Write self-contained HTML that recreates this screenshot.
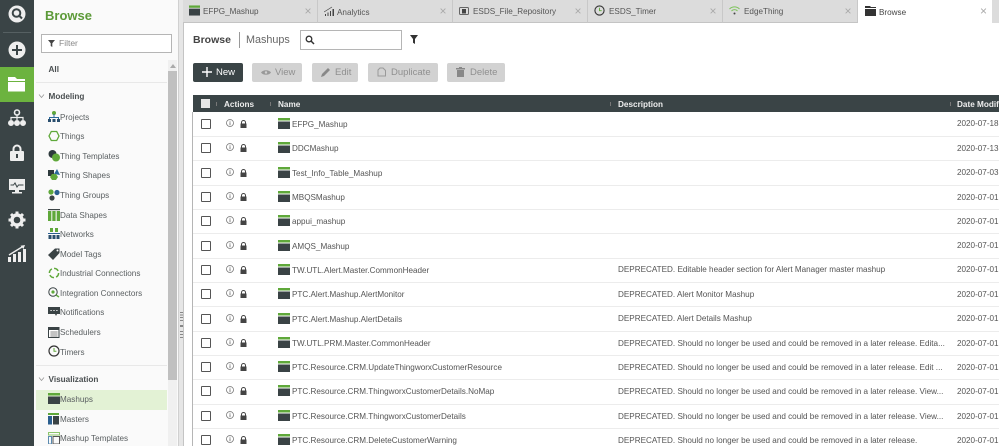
<!DOCTYPE html>
<html><head><meta charset="utf-8"><style>
html,body{margin:0;padding:0}
body{width:999px;height:446px;overflow:hidden;position:relative;background:#fff;font-family:"Liberation Sans",sans-serif;font-size:8.15px;color:#555;filter:blur(.3px)}
div,span,svg{position:absolute;white-space:nowrap;box-sizing:border-box}
.s{left:60px;height:16px;line-height:16px;color:#5a5f61;font-size:8.15px}
.si{left:48px;width:12px;height:12px}
.h{left:48.5px;font-weight:bold;color:#4a4f51;font-size:8.2px;line-height:14px}
.tab{top:0;height:23px;background:#dcdcdc;border-bottom:1px solid #c4c4c4;border-right:1px solid #c8c8c8}
.tl{top:5px;font-size:8.15px;line-height:13px;color:#555}
.x{top:5px;color:#aaa;font-size:12px;line-height:13px}
.b{top:63px;height:19px;background:#d2d2d2;border-radius:2px;color:#8f8f8f;font-size:9.5px;line-height:19px}
.ck{left:201px;width:10px;height:10px;border:1.2px solid #555;border-radius:1px;background:#fff}
.n{left:292px;font-size:8.15px;line-height:14px;color:#555}
.d{left:618px;font-size:8.15px;line-height:14px;color:#555}
.t{left:957px;font-size:8.15px;line-height:14px;color:#555}
.m{left:278px;width:12px;height:11px}
.i{left:226px;width:8px;height:8px}
.l{left:240px;width:7px;height:8px}
.r{left:193px;width:806px;height:1px;background:#ececec}
.th{top:98px;font-size:8.2px;line-height:14px;font-weight:bold;color:#eee}
</style></head><body>
<svg width="0" height="0" style="left:0;top:0"><defs>
<symbol id="m" viewBox="0 0 12 11"><rect width="12" height="2.5" fill="#5fa83a"/><rect y="3.5" width="12" height="7.5" fill="#3a4345"/></symbol>
<symbol id="k" viewBox="0 0 7 8"><path d="M1.5 4V2.5a2 2 0 0 1 4 0V4" fill="none" stroke="#444" stroke-width="1"/><rect y="3.5" x=".5" width="6" height="4.5" fill="#444"/></symbol>
<symbol id="f" viewBox="0 0 8 8"><circle cx="4" cy="4" r="3.5" fill="none" stroke="#777" stroke-width=".8"/><path d="M4 3.2V6.2M4 1.8v.8" stroke="#777" stroke-width=".9"/></symbol>
</defs></svg>

<!-- left rail -->
<div style="left:0;top:0;width:34px;height:446px;background:#3a4446"></div>
<div style="left:3px;top:32px;width:28px;height:1px;background:#566062"></div>
<div style="left:0;top:67px;width:34px;height:35px;background:#6cb33f"></div>
<svg style="left:8px;top:5px" width="18" height="18" viewBox="0 0 18 18"><circle cx="9" cy="9" r="8.5" fill="#eee"/><circle cx="8.5" cy="8" r="3.8" fill="none" stroke="#3a4446" stroke-width="2"/><path d="M11 10.5L14 13.5" stroke="#3a4446" stroke-width="2"/></svg>
<svg style="left:8px;top:41px" width="18" height="18" viewBox="0 0 18 18"><circle cx="9" cy="9" r="8.5" fill="#eee"/><path d="M9 4v10M4 9h10" stroke="#3a4446" stroke-width="2"/></svg>
<svg style="left:8px;top:77px" width="18" height="15" viewBox="0 0 18 15"><path d="M0 0h7l2 2h8v2H0z" fill="#fff"/><rect y="5" width="17" height="9.5" fill="#fff"/></svg>
<svg style="left:8px;top:109px" width="18" height="18" viewBox="0 0 18 18" fill="none" stroke="#eee"><circle cx="9" cy="3.5" r="2.5" stroke-width="1.6"/><path d="M9 6v5M3 11V8.5h12V11" stroke-width="1.2"/><circle cx="3" cy="14" r="2.5" fill="#eee"/><circle cx="9" cy="14" r="2.5" fill="#eee"/><circle cx="15" cy="14" r="2.5" fill="#eee"/></svg>
<svg style="left:10px;top:144px" width="14" height="17" viewBox="0 0 14 17"><path d="M3.5 8V5a3.5 3.5 0 0 1 7 0v3" fill="none" stroke="#eee" stroke-width="2"/><rect y="7" width="14" height="10" rx="1" fill="#eee"/><rect x="6" y="10" width="2" height="4" fill="#3a4446"/></svg>
<svg style="left:9px;top:179px" width="16" height="15" viewBox="0 0 16 15"><rect width="16" height="11" fill="#eee"/><path d="M1.5 6h3l1.5-2 2 4 1.5-2h5" fill="none" stroke="#3a4446"/><rect x="6" y="11" width="4" height="2" fill="#eee"/><rect x="3" y="13" width="10" height="1.5" fill="#eee"/></svg>
<svg style="left:8px;top:211px" width="18" height="18" viewBox="0 0 18 18"><circle cx="9" cy="9" r="5" fill="none" stroke="#eee" stroke-width="3.4"/><path d="M9 .5v3M9 14.5v3M.5 9h3M14.5 9h3M3 3l2 2M13 13l2 2M15 3l-2 2M5 13l-2 2" stroke="#eee" stroke-width="3"/></svg>
<svg style="left:8px;top:245px" width="18" height="17" viewBox="0 0 18 17"><path d="M1 10L14 2" stroke="#eee" stroke-width="1.4" fill="none"/><path d="M12.5 .8L17 0l-1.5 4z" fill="#eee"/><rect y="12" width="3" height="5" fill="#eee"/><rect x="5" y="9" width="3" height="8" fill="#eee"/><rect x="10" y="7" width="3" height="10" fill="#eee"/><rect x="15" y="4" width="3" height="13" fill="#eee"/></svg>

<!-- sidebar -->
<div style="left:34px;top:0;width:146px;height:446px;background:#fafafa"></div>
<div style="left:45px;top:7px;font-size:13px;line-height:18px;font-weight:bold;color:#5c9a38">Browse</div>
<div style="left:41px;top:34px;width:131px;height:19px;background:#fff;border:1px solid #b5b5b5"></div>
<svg style="left:48px;top:40px" width="7" height="7" viewBox="0 0 7 7"><path d="M0 0h7L4.3 3.2V7L2.7 6V3.2z" fill="#444"/></svg>
<div style="left:59px;top:37px;color:#888;font-size:8.5px;line-height:12px">Filter</div>
<div class="h" style="top:63px">All</div>
<div style="left:36px;top:82px;width:131px;height:1px;background:#e8e8e8"></div>
<svg style="left:38px;top:93px" width="7" height="6" viewBox="0 0 7 6"><path d="M1 1.5l2.5 3 2.5-3" fill="none" stroke="#999" stroke-width=".8"/></svg>
<div class="h" style="top:90px">Modeling</div>

<div class="s" style="top:110px">Projects</div>
<svg class="si" style="top:111px" viewBox="0 0 12 12"><circle cx="6" cy="2" r="2" fill="#5fa83a"/><path d="M6 3v4M1.5 9V6.5h9V9" stroke="#2b6a9b" fill="none"/><path d="M0 8h3v3H0zM4.5 8h3v3h-3zM9 8h3v3H9z" fill="#2a4f6e"/></svg>
<div class="s" style="top:129px">Things</div>
<svg class="si" style="top:130px" viewBox="0 0 12 12"><path d="M3.3 1.5h5.4L11 6l-2.3 4.5H3.3L1 6z" fill="none" stroke="#5fa83a" stroke-width="1.3"/></svg>
<div class="s" style="top:149px">Thing Templates</div>
<svg class="si" style="top:150px" viewBox="0 0 12 12"><circle cx="4.5" cy="4" r="4" fill="#2e3a3d"/><circle cx="8" cy="7.5" r="4" fill="#5fa83a"/></svg>
<div class="s" style="top:168px">Thing Shapes</div>
<svg class="si" style="top:169px" viewBox="0 0 12 12"><rect y="1" width="6" height="6" fill="#2e3a3d"/><path d="M6 5L9 0l3 6z" fill="#2b6a9b"/><path d="M2 8l2-3h4l2 3-2 3H4z" fill="#5fa83a"/></svg>
<div class="s" style="top:188px">Thing Groups</div>
<svg class="si" style="top:189px" viewBox="0 0 12 12"><circle cx="3" cy="3" r="2.6" fill="#5fa83a"/><circle cx="9" cy="3.5" r="2.6" fill="#2b5f8f"/><circle cx="4" cy="9" r="2.6" fill="#3a4345"/></svg>
<div class="s" style="top:208px">Data Shapes</div>
<svg class="si" style="top:209px" viewBox="0 0 12 12"><rect width="12" height="1.2" fill="#3a4345"/><rect y="2" width="3.3" height="10" fill="#5fa83a"/><rect x="4.3" y="2" width="3.3" height="10" fill="#5fa83a"/><rect x="8.7" y="2" width="3.3" height="10" fill="#5fa83a"/></svg>
<div class="s" style="top:227px">Networks</div>
<svg class="si" style="top:228px" viewBox="0 0 12 12"><rect x="2" y="0" width="3" height="4" fill="#5fa83a"/><rect x="7" y="0" width="3" height="4" fill="#5fa83a"/><rect y="5" width="12" height="1" fill="#2b5f8f"/><rect x=".5" y="7" width="3" height="4" fill="#2a4f6e"/><rect x="4.5" y="7" width="3" height="4" fill="#2a4f6e"/><rect x="8.5" y="7" width="3" height="4" fill="#2a4f6e"/></svg>
<div class="s" style="top:247px">Model Tags</div>
<svg class="si" style="top:248px" viewBox="0 0 12 12"><path d="M0 7L7 .5h4.5V5L5 12z" fill="#3a4345"/><circle cx="9.5" cy="2.5" r="1" fill="#fff"/></svg>
<div class="s" style="top:266px">Industrial Connections</div>
<svg class="si" style="top:267px" viewBox="0 0 12 12"><circle cx="6" cy="6" r="4.6" fill="none" stroke="#5fa83a" stroke-width="1.5" stroke-dasharray="5 2.2"/></svg>
<div class="s" style="top:286px">Integration Connectors</div>
<svg class="si" style="top:287px" viewBox="0 0 12 12"><circle cx="5" cy="5" r="4.2" fill="none" stroke="#3a4345"/><circle cx="5" cy="5" r="1.6" fill="#5fa83a"/><path d="M8 8l3 2" stroke="#5fa83a" stroke-width="1.4"/></svg>
<div class="s" style="top:305px">Notifications</div>
<svg class="si" style="top:307px" viewBox="0 0 12 12"><path d="M0 0h12v7H9l-1 2-1-2H0z" fill="#3a4345"/><path d="M2.5 3.5h1.2M5.4 3.5h1.2M8.3 3.5h1.2" stroke="#fff"/></svg>
<div class="s" style="top:325px">Schedulers</div>
<svg class="si" style="top:326px" viewBox="0 0 12 12"><rect x=".5" y="1.5" width="10.5" height="10" fill="#fff" stroke="#3a4345"/><rect x=".5" y="1.5" width="10.5" height="2.5" fill="#3a4345"/><path d="M2 6h8M2 8h8M2 10h8M4 5v6M6 5v6M8 5v6" stroke="#777" stroke-width=".5"/></svg>
<div class="s" style="top:344.5px">Timers</div>
<svg class="si" style="top:345px" viewBox="0 0 12 12"><circle cx="6" cy="6" r="5" fill="none" stroke="#333" stroke-width="1.2"/><path d="M6 3v3.2h2.4" fill="none" stroke="#5fa83a"/></svg>

<div style="left:36px;top:365px;width:131px;height:1px;background:#e8e8e8"></div>
<svg style="left:38px;top:376px" width="7" height="6" viewBox="0 0 7 6"><path d="M1 1.5l2.5 3 2.5-3" fill="none" stroke="#999" stroke-width=".8"/></svg>
<div class="h" style="top:373px">Visualization</div>
<div style="left:36px;top:389.5px;width:131px;height:20px;background:#e3f2d5"></div>
<div class="s" style="top:392px">Mashups</div>
<svg class="si" style="left:48px;top:393px;height:11px" viewBox="0 0 12 11"><use href="#m"/></svg>
<div class="s" style="top:412px">Masters</div>
<svg class="si" style="top:413px" viewBox="0 0 12 12"><rect width="11" height="2" fill="#5fa83a"/><rect y="3" width="4" height="8.5" fill="#2b5f8f"/><rect x="5" y="3" width="6" height="8.5" fill="#3a4345"/></svg>
<div class="s" style="top:431px">Mashup Templates</div>
<svg class="si" style="top:432px" viewBox="0 0 12 12" fill="none"><rect x=".5" y=".5" width="11" height="2.5" stroke="#8cc56b"/><rect x=".5" y="4.5" width="3" height="7.5" stroke="#5b8bb0"/><rect x="5" y="4.5" width="6.5" height="7.5" stroke="#555"/></svg>

<!-- sidebar scrollbar + splitter -->
<div style="left:168px;top:60px;width:9px;height:386px;background:#f0f0f0"></div>
<div style="left:168px;top:71px;width:9px;height:309px;background:#c0c0c0"></div>
<svg style="left:170px;top:64px" width="6" height="4" viewBox="0 0 6 4"><path d="M0 4L3 0l3 4z" fill="#aaa"/></svg>
<div style="left:178px;top:0;width:1px;height:446px;background:#d0d0d0"></div>
<div style="left:179px;top:0;width:4px;height:446px;background:#e6e6e6"></div>
<div style="left:183px;top:0;width:1px;height:446px;background:#c4c4c4"></div>
<svg style="left:179.5px;top:311px" width="3" height="30" viewBox="0 0 3 30" fill="#888"><path d="M0 1h3v1H0zM0 3.5h3v1H0zM0 6h3v1H0zM0 9h3v1H0zM0 14h3v2H0zM0 20h3v1H0zM0 23h3v1H0zM0 26h3v1H0z"/></svg>

<!-- tabs -->
<div class="tab" style="left:183px;width:135px"></div>
<svg style="left:189px;top:5px" width="11" height="11"><use href="#m"/></svg>
<div class="tl" style="left:203px">EFPG_Mashup</div><div class="x" style="left:304.5px">×</div>
<div class="tab" style="left:318px;width:135px"></div>
<svg style="left:324px;top:6px" width="11" height="10" viewBox="0 0 11 10"><path d="M0 6L8 1" stroke="#444" stroke-width=".7" fill="none"/><path d="M1 8h1v2H1zM3.5 6.5h1V10h-1zM6 5h1v5H6zM8.5 3h1.5v7H8.5z" fill="#444"/></svg>
<div class="tl" style="left:337px;top:6px">Analytics</div><div class="x" style="left:439.5px">×</div>
<div class="tab" style="left:453px;width:135px"></div>
<svg style="left:459px;top:6px" width="10" height="9" viewBox="0 0 10 9"><rect x=".5" y="1.5" width="9" height="7" rx="1" fill="none" stroke="#666"/><rect x="3" y="3" width="4" height="4.5" fill="#444"/></svg>
<div class="tl" style="left:473px">ESDS_File_Repository</div><div class="x" style="left:574.5px">×</div>
<div class="tab" style="left:588px;width:135px"></div>
<svg style="left:594px;top:5px" width="11" height="11" viewBox="0 0 12 12"><circle cx="6" cy="6" r="5" fill="none" stroke="#333" stroke-width="1.2"/><path d="M6 3v3.2h2.4" fill="none" stroke="#5fa83a"/></svg>
<div class="tl" style="left:609px">ESDS_Timer</div><div class="x" style="left:709.5px">×</div>
<div class="tab" style="left:723px;width:135px"></div>
<svg style="left:729px;top:6px" width="11" height="9" viewBox="0 0 11 9" fill="none" stroke="#7cc35a"><path d="M.5 3a7 7 0 0 1 10 0M2.5 5a4 4 0 0 1 6 0"/><circle cx="5.5" cy="7.5" r="1" fill="#444" stroke="none"/></svg>
<div class="tl" style="left:744px">EdgeThing</div><div class="x" style="left:844.5px">×</div>
<svg style="left:865px;top:6px" width="12" height="10" viewBox="0 0 12 10"><path d="M0 0h5l1 1h5v1H0z" fill="#333"/><rect y="3" width="11" height="7" fill="#333"/></svg>
<div class="tl" style="left:879px;top:6px;color:#444">Browse</div><div class="x" style="left:980px">×</div>
<div style="left:992px;top:0;width:7px;height:23px;background:#dcdcdc"></div>

<!-- toolbar -->
<div style="left:193px;top:33px;font-size:10.5px;line-height:14px;font-weight:bold;color:#444">Browse</div>
<div style="left:238.5px;top:32px;width:1px;height:16px;background:#999"></div>
<div style="left:246px;top:33px;font-size:10.8px;line-height:14px;color:#666">Mashups</div>
<div style="left:300px;top:30px;width:102px;height:20px;background:#fff;border:1px solid #b5b5b5"></div>
<svg style="left:305px;top:35px" width="10" height="10" viewBox="0 0 10 10"><circle cx="4" cy="4" r="2.8" fill="none" stroke="#333" stroke-width="1.3"/><path d="M6 6l3 3" stroke="#333" stroke-width="1.5"/></svg>
<svg style="left:410px;top:35px" width="9" height="9" viewBox="0 0 9 9"><path d="M0 0h8L5 4v5L3 7.8V4z" fill="#333"/></svg>

<div class="b" style="left:193px;width:50px;background:#3a4446;color:#fff;padding-left:23px">New</div>
<svg style="left:202px;top:67px" width="10" height="10" viewBox="0 0 10 10"><path d="M5 0v10M0 5h10" stroke="#fff" stroke-width="1.4"/></svg>
<div class="b" style="left:252px;width:50px;padding-left:23px">View</div>
<svg style="left:261px;top:69px" width="10" height="7" viewBox="0 0 10 7"><path d="M0 3.5C2 .5 8 .5 10 3.5C8 6.5 2 6.5 0 3.5z" fill="#999"/><circle cx="5" cy="3.5" r="1.2" fill="#d2d2d2"/></svg>
<div class="b" style="left:312px;width:46px;padding-left:23px">Edit</div>
<svg style="left:321px;top:67px" width="10" height="10" viewBox="0 0 10 10"><path d="M0 10l1-3 6-6 2 2-6 6z" fill="#888"/></svg>
<div class="b" style="left:368px;width:70px;padding-left:23px">Duplicate</div>
<svg style="left:377px;top:67px" width="9" height="11" viewBox="0 0 9 11" fill="none" stroke="#999"><path d="M3 1h3l2.5 2.5V9H1V3z"/></svg>
<div class="b" style="left:447px;width:58px;padding-left:23px">Delete</div>
<svg style="left:456px;top:67px" width="9" height="10" viewBox="0 0 9 10" fill="#888"><rect y="1" width="9" height="1.5"/><rect x="3" width="3" height="1"/><rect x="1" y="3" width="7" height="7"/></svg>

<!-- table header -->
<div style="left:193px;top:95px;width:806px;height:17px;background:#3a4446"></div>
<div style="left:201px;top:99px;width:9px;height:9px;background:#e6e6e6"></div>
<div style="left:216px;top:102px;width:1px;height:4px;background:#777"></div>
<div style="left:270px;top:102px;width:1px;height:4px;background:#777"></div>
<div style="left:610px;top:102px;width:1px;height:4px;background:#777"></div>
<div style="left:950px;top:102px;width:1px;height:4px;background:#777"></div>
<div class="th" style="left:224px">Actions</div>
<div class="th" style="left:278px">Name</div>
<div class="th" style="left:618px">Description</div>
<div class="th" style="left:957px">Date Modif</div>
<div style="left:192px;top:112px;width:1px;height:334px;background:#b5b5b5"></div>

<!-- rows -->
<div class="r" style="top:136px"></div><div class="r" style="top:160px"></div><div class="r" style="top:185px"></div><div class="r" style="top:209px"></div><div class="r" style="top:233px"></div><div class="r" style="top:258px"></div><div class="r" style="top:282px"></div><div class="r" style="top:306px"></div><div class="r" style="top:331px"></div><div class="r" style="top:355px"></div><div class="r" style="top:379px"></div><div class="r" style="top:404px"></div><div class="r" style="top:428px"></div>

<div class="ck" style="top:119px"></div><svg class="i" style="top:119px"><use href="#f"/></svg><svg class="l" style="top:120px"><use href="#k"/></svg><svg class="m" style="top:118px"><use href="#m"/></svg><div class="n" style="top:118px">EFPG_Mashup</div><div class="t" style="top:117px">2020-07-18</div>
<div class="ck" style="top:143px"></div><svg class="i" style="top:143px"><use href="#f"/></svg><svg class="l" style="top:144px"><use href="#k"/></svg><svg class="m" style="top:142px"><use href="#m"/></svg><div class="n" style="top:142px">DDCMashup</div><div class="t" style="top:142px">2020-07-13</div>
<div class="ck" style="top:168px"></div><svg class="i" style="top:168px"><use href="#f"/></svg><svg class="l" style="top:169px"><use href="#k"/></svg><svg class="m" style="top:167px"><use href="#m"/></svg><div class="n" style="top:167px">Test_Info_Table_Mashup</div><div class="t" style="top:166px">2020-07-03</div>
<div class="ck" style="top:192px"></div><svg class="i" style="top:192px"><use href="#f"/></svg><svg class="l" style="top:193px"><use href="#k"/></svg><svg class="m" style="top:191px"><use href="#m"/></svg><div class="n" style="top:191px">MBQSMashup</div><div class="t" style="top:191px">2020-07-01</div>
<div class="ck" style="top:216px"></div><svg class="i" style="top:216px"><use href="#f"/></svg><svg class="l" style="top:217px"><use href="#k"/></svg><svg class="m" style="top:215px"><use href="#m"/></svg><div class="n" style="top:215px">appui_mashup</div><div class="t" style="top:215px">2020-07-01</div>
<div class="ck" style="top:241px"></div><svg class="i" style="top:241px"><use href="#f"/></svg><svg class="l" style="top:242px"><use href="#k"/></svg><svg class="m" style="top:240px"><use href="#m"/></svg><div class="n" style="top:240px">AMQS_Mashup</div><div class="t" style="top:239px">2020-07-01</div>
<div class="ck" style="top:265px"></div><svg class="i" style="top:265px"><use href="#f"/></svg><svg class="l" style="top:266px"><use href="#k"/></svg><svg class="m" style="top:264px"><use href="#m"/></svg><div class="n" style="top:264px">TW.UTL.Alert.Master.CommonHeader</div><div class="d" style="top:263px">DEPRECATED. Editable header section for Alert Manager master mashup</div><div class="t" style="top:263px">2020-07-01</div>
<div class="ck" style="top:289px"></div><svg class="i" style="top:289px"><use href="#f"/></svg><svg class="l" style="top:290px"><use href="#k"/></svg><svg class="m" style="top:288px"><use href="#m"/></svg><div class="n" style="top:288px">PTC.Alert.Mashup.AlertMonitor</div><div class="d" style="top:288px">DEPRECATED. Alert Monitor Mashup</div><div class="t" style="top:288px">2020-07-01</div>
<div class="ck" style="top:314px"></div><svg class="i" style="top:314px"><use href="#f"/></svg><svg class="l" style="top:315px"><use href="#k"/></svg><svg class="m" style="top:313px"><use href="#m"/></svg><div class="n" style="top:313px">PTC.Alert.Mashup.AlertDetails</div><div class="d" style="top:312px">DEPRECATED. Alert Details Mashup</div><div class="t" style="top:312px">2020-07-01</div>
<div class="ck" style="top:338px"></div><svg class="i" style="top:338px"><use href="#f"/></svg><svg class="l" style="top:339px"><use href="#k"/></svg><svg class="m" style="top:337px"><use href="#m"/></svg><div class="n" style="top:337px">TW.UTL.PRM.Master.CommonHeader</div><div class="d" style="top:337px">DEPRECATED. Should no longer be used and could be removed in a later release. Edita...</div><div class="t" style="top:337px">2020-07-01</div>
<div class="ck" style="top:362px"></div><svg class="i" style="top:362px"><use href="#f"/></svg><svg class="l" style="top:363px"><use href="#k"/></svg><svg class="m" style="top:361px"><use href="#m"/></svg><div class="n" style="top:361px">PTC.Resource.CRM.UpdateThingworxCustomerResource</div><div class="d" style="top:361px">DEPRECATED. Should no longer be used and could be removed in a later release. Edit ...</div><div class="t" style="top:361px">2020-07-01</div>
<div class="ck" style="top:386px"></div><svg class="i" style="top:386px"><use href="#f"/></svg><svg class="l" style="top:387px"><use href="#k"/></svg><svg class="m" style="top:385px"><use href="#m"/></svg><div class="n" style="top:385px">PTC.Resource.CRM.ThingworxCustomerDetails.NoMap</div><div class="d" style="top:385px">DEPRECATED. Should no longer be used and could be removed in a later release. View...</div><div class="t" style="top:385px">2020-07-01</div>
<div class="ck" style="top:411px"></div><svg class="i" style="top:411px"><use href="#f"/></svg><svg class="l" style="top:412px"><use href="#k"/></svg><svg class="m" style="top:410px"><use href="#m"/></svg><div class="n" style="top:410px">PTC.Resource.CRM.ThingworxCustomerDetails</div><div class="d" style="top:410px">DEPRECATED. Should no longer be used and could be removed in a later release. View...</div><div class="t" style="top:410px">2020-07-01</div>
<div class="ck" style="top:435px"></div><svg class="i" style="top:435px"><use href="#f"/></svg><svg class="l" style="top:436px"><use href="#k"/></svg><svg class="m" style="top:434px"><use href="#m"/></svg><div class="n" style="top:434px">PTC.Resource.CRM.DeleteCustomerWarning</div><div class="d" style="top:434px">DEPRECATED. Should no longer be used and could be removed in a later release.</div><div class="t" style="top:434px">2020-07-01</div>
</body></html>
